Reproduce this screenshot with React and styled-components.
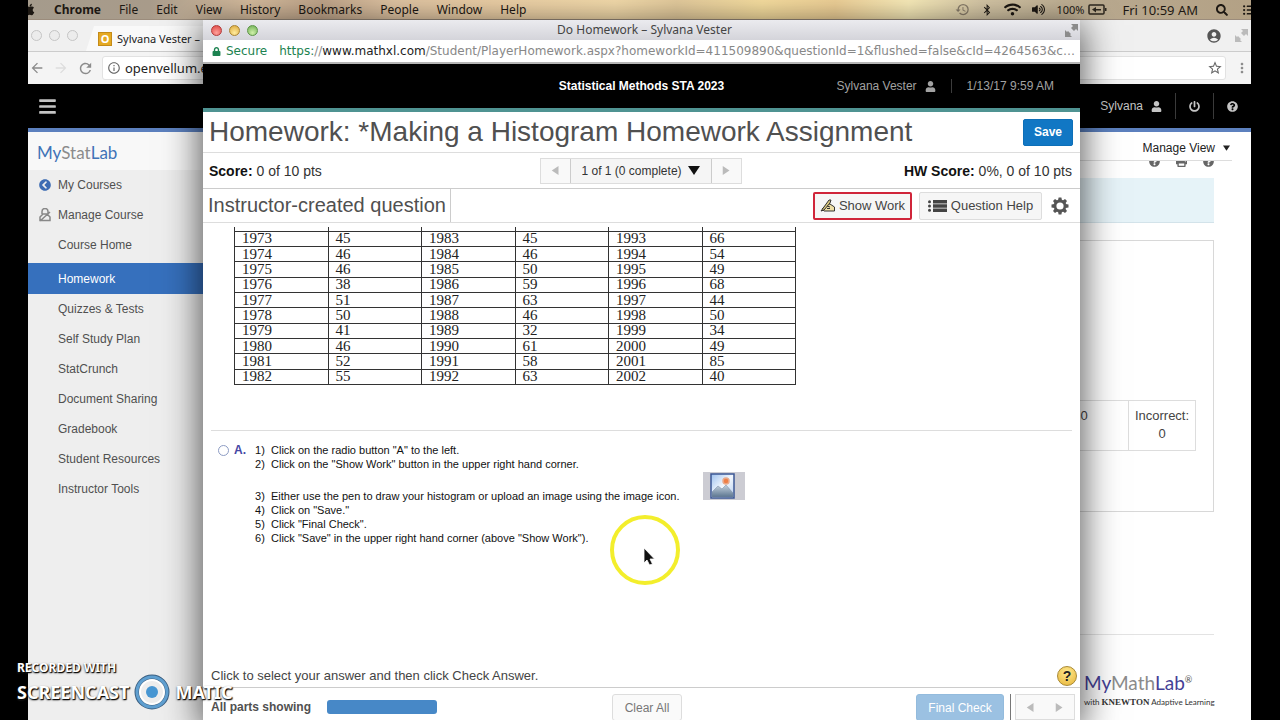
import styled, { createGlobalStyle } from "styled-components";
import { FaApple, FaBars, FaBluetoothB, FaLock, FaPowerOff, FaQuestionCircle, FaSearch, FaUser, FaVolumeUp, FaChevronCircleLeft, FaPrint, FaListUl, FaWifi } from "react-icons/fa";
import { MdAccountCircle, MdArrowBack, MdArrowForward, MdHistory, MdInfoOutline, MdMoreVert, MdRefresh, MdStarBorder } from "react-icons/md";

const GlobalStyle = createGlobalStyle`
    * {
        box-sizing: border-box;
    }

    body {
        margin: 0;
        background: #000;
        font-family: "Liberation Sans", Arial, sans-serif;
        font-size: 14px;
        color: #444;
    }

    button, input, select {
        font: inherit;
        color: inherit;
        margin: 0;
    }

    svg {
        display: block;
        flex-shrink: 0;
    }
`

const Desktop = styled.div`
    position: relative;
    display: flex;
    flex-direction: column;
    height: 100vh;
    margin: 0 29px 0 28px;
    overflow: hidden;
`

/* menu bar */

const MenuBar = styled.header`
    display: flex;
    align-items: center;
    justify-content: space-between;
    height: 20px;
    flex-shrink: 0;
    overflow: hidden;
    background: linear-gradient(90deg, #a59b8c 0%, #a89b8a 10%, #d9bfa0 18%, #c2a78c 24%, #e3c7a5 30%, #efd2a8 38%, #f8dfae 48%, #e8cfa0 53%, #fbe2a2 60%, #f3d49a 66%, #fdf0bd 72%, #d8c9a8 78%, #b8a88e 88%, #b3a185 100%);
    border-bottom: 1px solid #9b8c7c;
    font-family: "Noto Sans", "Lucida Grande", sans-serif;
    font-size: 12px;
    line-height: 18px;
    color: #1d1813;
`

const MenuItems = styled.nav`
    display: flex;
    align-items: center;
    gap: 18px;
    margin-left: -5px;
`

const MenuItem = styled.span`
    font-weight: ${props => props.$bold ? 700 : 400};
`

const MenuStatus = styled.div`
    display: flex;
    align-items: center;
    gap: 15px;
    margin-right: -4px;
`

const StatusIcons = styled.div`
    display: flex;
    align-items: center;
    gap: 11px;
`

const Battery = styled.span`
    display: flex;
    align-items: center;
    gap: 4px;
    font-size: 11px;
`

const Clock = styled.span`
    padding-right: 3px;
    font-size: 13px;
`

/* browser window at the back */

const BackWindow = styled.section`
    display: flex;
    flex-direction: column;
    flex: 1;
    background: #fff;
`

const TabStrip = styled.div`
    display: flex;
    align-items: center;
    height: 32px;
    padding: 0 3px;
    background: #f0f0f0;
    border-bottom: 1px solid #ccc;
`

const Lights = styled.div`
    display: flex;
    gap: 7px;
`

const Light = styled.span`
    width: 11px;
    height: 11px;
    border-radius: 50%;
    border: 1px solid ${props => props.$edge};
    background: ${props => props.$fill};
`

const Tab = styled.div`
    display: flex;
    align-items: center;
    gap: 5px;
    height: 25px;
    margin: 6px 0 0 8px;
    padding: 0 12px;
    background: #f9f9f9;
    clip-path: polygon(8px 0, 100% 0, 100% 100%, 0 100%);
    font-family: "Noto Sans", sans-serif;
    font-size: 11px;
    color: #222;
`

const TabMark = styled.span`
    width: 14px;
    height: 14px;
    background: #e5a922;
    border: 1px solid #c48b18;
    color: #fff;
    font-weight: 700;
    line-height: 12px;
    text-align: center;
`

const StripEnd = styled.div`
    display: flex;
    align-items: center;
    gap: 13px;
    margin-left: auto;
    color: #555;
`

const AddressBar = styled.div`
    display: flex;
    align-items: center;
    gap: 8px;
    height: 32px;
    padding: 0 1px;
    background: #f4f4f4;
    color: #8b8b8b;
`

const AddressBox = styled.label`
    display: flex;
    align-items: center;
    flex: 1;
    gap: 4px;
    height: 24px;
    padding: 0 2px 0 4px;
    background: #fff;
    border: 1px solid #e2e2e2;
    border-radius: 3px;
    color: #666;
`

const AddressInput = styled.input`
    flex: 1;
    min-width: 0;
    border: 0;
    padding: 0;
    outline: 0;
    background: none;
    font-family: "Noto Sans", sans-serif;
    font-size: 13px;
    color: #222;
`

const CourseBar = styled.div`
    display: flex;
    align-items: center;
    height: 48px;
    flex-shrink: 0;
    padding: 0 13px 0 10px;
    background: #000;
    border-bottom: 4px solid #5c80be;
    color: #c4c4c4;
`

const BarButton = styled.button`
    display: flex;
    align-items: center;
    gap: 8px;
    height: 26px;
    padding: 0;
    border: 0;
    background: none;
    color: #c4c4c4;
    font-size: 12px;
`

const BarGroup = styled.div`
    display: flex;
    align-items: center;
    gap: 13px;
    margin-left: auto;
`

const BarLine = styled.span`
    width: 1px;
    height: 26px;
    background: #3a3a3a;
`

const CourseBody = styled.div`
    display: flex;
    flex: 1;
`

const Sidebar = styled.aside`
    width: 190px;
    background: #eee;
`

const StatLogo = styled.div`
    height: 38px;
    padding: 8px 9px 0;
    background: #f8f8f8;
    font-family: "Lato", sans-serif;
    font-size: 17px;
    line-height: 26px;
    color: #3f73b7;
`

const Soft = styled.span`
    color: #8b8b8b;
`

const SideLink = styled.a`
    display: flex;
    align-items: center;
    gap: 7px;
    height: ${props => props.$active ? 31 : 30}px;
    margin-top: ${props => props.$active ? 3 : 0}px;
    padding-left: ${props => props.$icon ? 11 : 30}px;
    background: ${props => props.$active ? "#3670bd" : "none"};
    color: ${props => props.$active ? "#fff" : "#505050"};
    text-decoration: none;
    font-size: 12px;
`

const CourseMain = styled.main`
    display: flex;
    flex-direction: column;
    flex: 1;
    padding: 0 37px 0 20px;
`

const ManageRow = styled.div`
    display: flex;
    justify-content: flex-end;
    height: 29px;
    margin-right: -18px;
    border-bottom: 1px solid #ddd;
`

const ManageButton = styled.button`
    display: flex;
    align-items: center;
    gap: 8px;
    height: 32px;
    padding: 0 2px;
    border: 0;
    background: none;
    font-size: 12px;
    color: #222;
`

const ToolRow = styled.div`
    display: flex;
    justify-content: flex-end;
    align-items: flex-end;
    gap: 16px;
    height: 6px;
    overflow: hidden;
    color: #666;
`

const Notice = styled.div`
    height: 45px;
    margin-top: 11px;
    background: #e6f3f8;
    border-bottom: 1px solid #d3e3ea;
`

const Results = styled.div`
    display: flex;
    flex-direction: column;
    align-items: flex-end;
    height: 272px;
    margin-top: 17px;
    padding: 159px 17px 0;
    border: 1px solid #d8d8d8;
`

const Tally = styled.div`
    display: flex;
    border: 1px solid #ddd;
`

const TallyCell = styled.div`
    width: ${props => props.$wide ? 88 : 67}px;
    height: 49px;
    padding-top: 6px;
    border-left: ${props => props.$wide ? "0" : "1px solid #ddd"};
    text-align: center;
    font-size: 13px;
    line-height: 18px;
`

const CourseFooter = styled.footer`
    display: flex;
    flex-direction: column;
    align-items: flex-end;
    margin: 122px 0 0;
    padding-top: 34px;
    border-top: 1px solid #e3e3e3;
`

const MathLogo = styled.div`
    width: 130px;
    font-family: "Lato", sans-serif;
    font-size: 19px;
    line-height: 28px;
    color: #453f96;
`

const Mark = styled.sup`
    font-size: 9px;
    line-height: 1px;
    color: #555;
`

const Knewton = styled.div`
    width: 130px;
    font-family: "Lato", sans-serif;
    font-size: 8px;
    line-height: 10px;
    white-space: nowrap;
    color: #333;

    b {
        font-family: "Liberation Serif", serif;
        font-size: 9px;
    }
`

/* homework player window */

const Player = styled.section`
    position: absolute;
    top: 20px;
    bottom: 0;
    left: 175px;
    right: 171px;
    display: flex;
    flex-direction: column;
    background: #fff;
    box-shadow: 0 8px 34px 3px rgba(0, 0, 0, 0.65);
`

const TitleBar = styled.div`
    display: grid;
    grid-template-columns: 1fr auto 1fr;
    align-items: center;
    height: 20px;
    flex-shrink: 0;
    padding: 0 2px 0 8px;
    background: linear-gradient(#ebebef, #d4d4da);
    font-family: "Noto Sans", sans-serif;
    font-size: 12px;
    line-height: 18px;
    color: #444;
`

const TitleEnd = styled.div`
    display: flex;
    justify-content: flex-end;
`

const UrlBar = styled.div`
    display: flex;
    align-items: center;
    height: 24px;
    flex-shrink: 0;
    padding: 0 0 0 9px;
    border-bottom: 2px solid #b5b5b5;
    font-family: "DejaVu Sans", sans-serif;
    font-size: 12px;
    color: #888;
`

const Secure = styled.span`
    display: flex;
    align-items: center;
    gap: 5px;
    margin-right: 12px;
    color: #1c8250;
`

const Url = styled.span`
    flex: 1;
    min-width: 0;
    overflow: hidden;
    white-space: nowrap;
`

const UrlPart = styled.span`
    color: ${props => props.$color};
`

const PlayerBar = styled.div`
    display: grid;
    grid-template-columns: 1fr auto 1fr;
    align-items: center;
    height: 48px;
    flex-shrink: 0;
    padding: 0 26px 0 0;
    background: #000;
    border-bottom: 4px solid #4f9392;
    font-size: 12px;
    color: #a2a2a2;
`

const CourseName = styled.span`
    padding-left: 26px;
    font-weight: 700;
    color: #fff;
`

const UserInfo = styled.div`
    display: flex;
    align-items: center;
    justify-content: flex-end;
    gap: 15px;
`

const UserName = styled.span`
    display: flex;
    align-items: center;
    gap: 8px;
`

const Divider = styled.span`
    width: 1px;
    height: 14px;
    background: #3c3c3c;
`

const Heading = styled.div`
    display: flex;
    align-items: center;
    justify-content: space-between;
    height: 41px;
    flex-shrink: 0;
    padding: 0 7px 0 6px;
    border-bottom: 1px solid #ddd;
`

const Title = styled.h1`
    margin: 0;
    font-size: 28px;
    line-height: 36px;
    font-weight: 400;
    white-space: nowrap;
    color: #505050;
`

const SaveButton = styled.button`
    width: 50px;
    height: 27px;
    padding: 0;
    border: 1px solid #0d6fb8;
    border-radius: 2px;
    background: #1177c4;
    color: #fff;
    font-size: 12px;
    font-weight: 700;
`

const ScoreRow = styled.div`
    display: grid;
    grid-template-columns: 1fr auto 1fr;
    align-items: center;
    height: 36px;
    flex-shrink: 0;
    padding: 0 8px 0 6px;
    border-bottom: 1px solid #ccc;
    color: #333;

    b {
        color: #111;
    }
`

const HwScore = styled.span`
    text-align: right;
`

const Pager = styled.div`
    display: flex;
    height: 26px;
    border: 1px solid #ddd;
    background: #f9f9f9;
    font-size: 12px;
`

const PagerButton = styled.button`
    display: flex;
    align-items: center;
    justify-content: center;
    width: 29px;
    padding: 0;
    border: 0;
    background: none;
    color: #bbb;
`

const PagerPick = styled.label`
    position: relative;
    display: flex;
    align-items: center;
    border-left: 1px solid #ccc;
    border-right: 1px solid #ccc;
    background: #f5f5f5;

    svg {
        position: absolute;
        right: 11px;
        pointer-events: none;
        color: #111;
    }
`

const PagerSelect = styled.select`
    appearance: none;
    width: 140px;
    height: 24px;
    padding: 0 11px;
    border: 0;
    outline: 0;
    background: none;
`

const QuestionRow = styled.div`
    display: flex;
    align-items: center;
    height: 34px;
    flex-shrink: 0;
    padding: 0 11px 0 5px;
    border-bottom: 1px solid #ddd;
`

const QuestionTitle = styled.h2`
    display: flex;
    align-items: center;
    height: 33px;
    margin: 0 auto 0 0;
    padding-right: 4px;
    border-right: 1px solid #ccc;
    font-size: 20px;
    font-weight: 400;
    color: #505050;
`

const ToolButton = styled.button`
    display: flex;
    align-items: center;
    justify-content: center;
    gap: 4px;
    width: ${props => props.$alert ? 99 : 123}px;
    height: 28px;
    margin-right: ${props => props.$alert ? 7 : 9}px;
    padding: 0;
    border: ${props => props.$alert ? "2px solid #d0253a" : "1px solid #ddd"};
    border-radius: 2px;
    background: #f6f6f6;
    font-size: 13px;
`

const IconButton = styled.button`
    padding: 0;
    border: 0;
    background: none;
    color: #555;
`

const Question = styled.div`
    flex: 1;
    min-height: 0;
    padding: 4px 8px 0;
    overflow: hidden;
`

const DataTable = styled.table`
    width: 562px;
    height: 158px;
    margin-left: 23px;
    table-layout: fixed;
    border-collapse: collapse;
    font-family: "Liberation Serif", serif;
    font-size: 15px;
    line-height: 13px;
    color: #222;
`

const Cell = styled.td`
    height: ${props => props.$stub ? 4 : 15}px;
    padding: 0 0 0 7px;
    border: 1px solid #333;
    border-top-width: ${props => props.$stub ? 0 : 1}px;
`

const Answer = styled.label`
    display: flex;
    align-items: flex-start;
    margin-top: 45px;
    padding: 12px 0 0 7px;
    border-top: 1px solid #ddd;
    font-size: 11px;
    line-height: 14px;
    color: #111;
`

const Radio = styled.input`
    appearance: none;
    width: 11px;
    height: 11px;
    margin: 2px 5px 0 0;
    border: 1px solid #8d9cc4;
    border-radius: 50%;
`

const Letter = styled.b`
    width: 21px;
    font-size: 12px;
    color: #4547a5;
`

const Steps = styled.div`
    display: flex;
    flex-direction: column;
`

const Step = styled.div`
    display: flex;
    align-items: flex-end;
    height: ${props => props.$tall ? 32 : 14}px;
`

const StepNumber = styled.span`
    width: 16px;
`

const StepImage = styled.span`
    display: flex;
    padding-bottom: 3px;
    margin-left: 24px;
`

const Hint = styled.div`
    display: flex;
    align-items: center;
    justify-content: space-between;
    height: 24px;
    flex-shrink: 0;
    padding: 0 3px 0 8px;
    border-bottom: 1px solid #ccc;
    font-size: 13px;
`

const HelpButton = styled.button`
    width: 20px;
    height: 20px;
    padding: 0;
    border: 1px solid #a98a35;
    border-radius: 50%;
    background: radial-gradient(circle at 50% 30%, #ffe98f, #e7b437);
    color: #222;
    font-size: 14px;
    font-weight: 700;
    line-height: 18px;
`

const PlayerFooter = styled.footer`
    display: flex;
    align-items: flex-start;
    height: 32px;
    flex-shrink: 0;
    padding: 6px 5px 0 8px;
    overflow: hidden;
    font-size: 12px;
    line-height: 26px;
`

const Parts = styled.div`
    display: flex;
    align-items: center;
    flex: 1;
    gap: 16px;
    padding-right: 8px;
    font-weight: 700;
    color: #505050;
`

const Progress = styled.div`
    width: 110px;
    height: 14px;
    border-radius: 3px;
    background: #4788c7;
`

const FooterEnd = styled.div`
    display: flex;
    justify-content: flex-end;
    flex: 1;
`

const FooterButton = styled.button`
    width: ${props => props.$primary ? 88 : 70}px;
    height: 27px;
    padding: 0;
    border: 1px solid ${props => props.$primary ? "#93bbdd" : "#ddd"};
    border-radius: 3px;
    background: ${props => props.$primary ? "#9bc1e2" : "#fafafa"};
    color: ${props => props.$primary ? "#fff" : "#777"};
`

const FooterLine = styled.span`
    width: 1px;
    height: 27px;
    margin: 0 4px 0 6px;
    background: #777;
`

/* things the recorder lays over the screen */

const Pointer = styled.div`
    position: absolute;
    top: 515px;
    left: 581px;
`

const Watermark = styled.div`
    position: absolute;
    left: 17px;
    bottom: 10px;
    font-family: "Noto Sans", sans-serif;
    font-weight: 700;
    color: #fff;
    text-shadow: 1px 1px 1px #000, 0 1px 2px #333;
`

const Recorded = styled.div`
    font-size: 12px;
    line-height: 12px;
`

const Brand = styled.div`
    display: flex;
    align-items: center;
    gap: 5px;
    font-size: 18px;
    line-height: 36px;
`

const menu = ["File", "Edit", "View", "History", "Bookmarks", "People", "Window", "Help"]

const links = ["Course Home", "Homework", "Quizzes & Tests", "Self Study Plan", "StatCrunch", "Document Sharing", "Gradebook", "Student Resources", "Instructor Tools"]

const rows = [
    [1973, 45, 1983, 45, 1993, 66],
    [1974, 46, 1984, 46, 1994, 54],
    [1975, 46, 1985, 50, 1995, 49],
    [1976, 38, 1986, 59, 1996, 68],
    [1977, 51, 1987, 63, 1997, 44],
    [1978, 50, 1988, 46, 1998, 50],
    [1979, 41, 1989, 32, 1999, 34],
    [1980, 46, 1990, 61, 2000, 49],
    [1981, 52, 1991, 58, 2001, 85],
    [1982, 55, 1992, 63, 2002, 40],
]

const steps = [
    "Click on the radio button \"A\" to the left.",
    "Click on the \"Show Work\" button in the upper right hand corner.",
    "Either use the pen to draw your histogram or upload an image using the image icon.",
    "Click on \"Save.\"",
    "Click \"Final Check\".",
    "Click \"Save\" in the upper right hand corner (above \"Show Work\").",
]

function Triangle({ dir, size = 9 }) {
    const points = {
        left: "10,0 10,12 1,6",
        right: "1,0 1,12 10,6",
        down: "0,1 12,1 6,10",
    }
    return (
        <svg width={size} height={size} viewBox="0 0 12 12" fill="currentColor">
            <polygon points={points[dir]} />
        </svg>
    )
}

function Expand({ color }) {
    return (
        <svg width="13" height="13" viewBox="0 0 13 13" fill={color}>
            <path d="M6 0h7v7l-2-2-2 2-3-3 2-2zM7 13H0V6l2 2 1-1 3 3-1 1z" />
        </svg>
    )
}

function BatteryIcon() {
    return (
        <svg width="19" height="11" viewBox="0 0 19 11">
            <rect x="1" y="1" width="15" height="9" rx="1" fill="none" stroke="#2c261e" strokeWidth="1.500" />
            <path d="M17 4h1.500v3H17zM4 5.500l4-2.500v2h5v1.500H8v2z" fill="#2c261e" />
        </svg>
    )
}

function WritingHand() {
    return (
        <svg width="15" height="13" viewBox="0 0 15 13">
            <path d="M4 8l3-3 3 0 3 2 1.500 1v4H4L2 10z" fill="#eedfa5" stroke="#333" />
            <path d="M1 12L9 1h2l-1 3-6 7zM7 7l3 1M7 9.500h3" fill="#d9c77e" stroke="#333" />
        </svg>
    )
}

function HelpList() {
    return (
        <svg width="19" height="14" viewBox="0 0 19 14" fill="#444">
            <path d="M5 1h14v3.500H5zM5 5.300h14v3.500H5zM5 9.600h14v3.500H5z" />
            <circle cx="1.500" cy="2.700" r="1.500" />
            <circle cx="1.500" cy="7" r="1.500" />
            <circle cx="1.500" cy="11.300" r="1.500" />
        </svg>
    )
}

function Gear() {
    const teeth = [0, 45, 90, 135, 180, 225, 270, 315]
    return (
        <svg width="18" height="18" viewBox="0 0 18 18" fill="currentColor">
            <circle cx="9" cy="9" r="5" fill="none" stroke="currentColor" strokeWidth="2.800" />
            {teeth.map(angle => (
                <path key={angle} d="M7 3.500L7.600 0.500h2.800l0.600 3z" transform={`rotate(${angle} 9 9)`} />
            ))}
        </svg>
    )
}

function ManageIcon() {
    return (
        <svg width="12" height="14" viewBox="0 0 12 14" fill="none" stroke="#888" strokeWidth="1.500">
            <path d="M3 6V3.500a3 3 0 0 1 6 0V6M1 12.500h10V9L8 6H4L1 9zM1 13L11 4" />
        </svg>
    )
}

function ImageIcon() {
    return (
        <svg width="42" height="28" viewBox="0 0 42 28">
            <defs>
                <linearGradient id="sky" x2="1" y2="1">
                    <stop offset="0" stopColor="#9cc0ee" />
                    <stop offset="0.500" stopColor="#f2f7fd" />
                    <stop offset="1" stopColor="#b4cdee" />
                </linearGradient>
                <linearGradient id="hill" x2="0" y2="1">
                    <stop offset="0" stopColor="#c5d2de" />
                    <stop offset="1" stopColor="#5c7690" />
                </linearGradient>
            </defs>
            <rect width="42" height="28" fill="#ccccd3" />
            <rect x="8" y="2" width="23" height="24" fill="url(#sky)" stroke="#3b5795" strokeWidth="1.500" />
            <circle cx="23" cy="9" r="3" fill="#ef7f47" stroke="#e9a98a" strokeWidth="1.500" />
            <path d="M9 20l6-6 4 3 4-4 7 8v4H9z" fill="url(#hill)" stroke="#7085a0" strokeWidth="0.500" />
        </svg>
    )
}

function PlayerWindow() {
    return (
        <Player>
            <TitleBar>
                <Lights>
                    <Light $edge="#b33a3a" $fill="radial-gradient(circle at 50% 75%, #ffa09a, #dc4340)" />
                    <Light $edge="#a98432" $fill="radial-gradient(circle at 50% 75%, #ffec9d, #dba63a)" />
                    <Light $edge="#5d9548" $fill="radial-gradient(circle at 50% 75%, #cff0a9, #6dae52)" />
                </Lights>
                <span>Do Homework – Sylvana Vester</span>
                <TitleEnd><Expand color="#8b8b8b" /></TitleEnd>
            </TitleBar>

            <UrlBar>
                <Secure><FaLock size={9} />Secure</Secure>
                <Url>
                    <UrlPart $color="#1c8250">https:</UrlPart>//<UrlPart $color="#222">www.mathxl.com</UrlPart>/Student/PlayerHomework.aspx?homeworkId=411509890&amp;questionId=1&amp;flushed=false&amp;cId=4264563&amp;c…
                </Url>
            </UrlBar>

            <PlayerBar>
                <span />
                <CourseName>Statistical Methods STA 2023</CourseName>
                <UserInfo>
                    <UserName>Sylvana Vester <FaUser size={11} /></UserName>
                    <Divider />
                    <span>1/13/17 9:59 AM</span>
                </UserInfo>
            </PlayerBar>

            <Heading>
                <Title>Homework: *Making a Histogram Homework Assignment</Title>
                <SaveButton>Save</SaveButton>
            </Heading>

            <ScoreRow>
                <span><b>Score:</b> 0 of 10 pts</span>
                <Pager>
                    <PagerButton aria-label="Previous question"><Triangle dir="left" /></PagerButton>
                    <PagerPick>
                        <PagerSelect aria-label="Question">
                            <option>1 of 1 (0 complete)</option>
                        </PagerSelect>
                        <Triangle dir="down" size={12} />
                    </PagerPick>
                    <PagerButton aria-label="Next question"><Triangle dir="right" /></PagerButton>
                </Pager>
                <HwScore><b>HW Score:</b> 0%, 0 of 10 pts</HwScore>
            </ScoreRow>

            <QuestionRow>
                <QuestionTitle>Instructor-created question</QuestionTitle>
                <ToolButton $alert><WritingHand />Show Work</ToolButton>
                <ToolButton><HelpList />Question Help</ToolButton>
                <IconButton aria-label="Settings"><Gear /></IconButton>
            </QuestionRow>

            <Question>
                <DataTable>
                    <tbody>
                        <tr>
                            {rows[0].map((_, i) => <Cell key={i} $stub />)}
                        </tr>
                        {rows.map(row => (
                            <tr key={row[0]}>
                                {row.map((value, i) => <Cell key={i}>{value}</Cell>)}
                            </tr>
                        ))}
                    </tbody>
                </DataTable>

                <Answer>
                    <Radio type="radio" name="answer" />
                    <Letter>A.</Letter>
                    <Steps>
                        {steps.map((step, i) => (
                            <Step key={step} $tall={i === 2}>
                                <StepNumber>{i + 1})</StepNumber>
                                {step}
                                {i === 2 && <StepImage><ImageIcon /></StepImage>}
                            </Step>
                        ))}
                    </Steps>
                </Answer>
            </Question>

            <Hint>
                Click to select your answer and then click Check Answer.
                <HelpButton>?</HelpButton>
            </Hint>

            <PlayerFooter>
                <Parts>All parts showing <Progress /></Parts>
                <FooterButton>Clear All</FooterButton>
                <FooterEnd>
                    <FooterButton $primary>Final Check</FooterButton>
                    <FooterLine />
                    <Pager>
                        <PagerButton aria-label="Previous part"><Triangle dir="left" /></PagerButton>
                        <PagerButton aria-label="Next part"><Triangle dir="right" /></PagerButton>
                    </Pager>
                </FooterEnd>
            </PlayerFooter>
        </Player>
    )
}

export default function App() {
    return (
        <>
            <GlobalStyle />
            <Desktop>
                <MenuBar>
                    <MenuItems>
                        <FaApple size={13} />
                        <MenuItem $bold>Chrome</MenuItem>
                        {menu.map(item => <MenuItem key={item}>{item}</MenuItem>)}
                    </MenuItems>
                    <MenuStatus>
                        <StatusIcons>
                            <MdHistory size={15} color="#8b7f6c" />
                            <FaBluetoothB size={12} />
                            <FaWifi size={17} />
                            <FaVolumeUp size={13} />
                            <Battery>100% <BatteryIcon /></Battery>
                        </StatusIcons>
                        <Clock>Fri 10:59 AM</Clock>
                        <FaSearch size={12} />
                        <FaListUl size={12} />
                    </MenuStatus>
                </MenuBar>

                <BackWindow>
                    <TabStrip>
                        <Lights>
                            <Light $edge="#c5c5c5" $fill="#ececec" />
                            <Light $edge="#c5c5c5" $fill="#ececec" />
                            <Light $edge="#c5c5c5" $fill="#ececec" />
                        </Lights>
                        <Tab><TabMark>O</TabMark>Sylvana Vester –</Tab>
                        <StripEnd>
                            <MdAccountCircle size={16} />
                            <Expand color="#bbb" />
                        </StripEnd>
                    </TabStrip>

                    <AddressBar>
                        <MdArrowBack size={16} />
                        <MdArrowForward size={16} color="#ddd" />
                        <MdRefresh size={17} />
                        <AddressBox>
                            <MdInfoOutline size={14} />
                            <AddressInput aria-label="Address" defaultValue="openvellum.e" />
                            <MdStarBorder size={16} />
                        </AddressBox>
                        <MdMoreVert size={16} />
                    </AddressBar>

                    <CourseBar>
                        <BarButton aria-label="Menu"><FaBars size={19} /></BarButton>
                        <BarGroup>
                            <BarButton>Sylvana <FaUser size={11} /></BarButton>
                            <BarLine />
                            <BarButton aria-label="Sign out"><FaPowerOff size={11} /></BarButton>
                            <BarLine />
                            <BarButton aria-label="Help"><FaQuestionCircle size={11} /></BarButton>
                        </BarGroup>
                    </CourseBar>

                    <CourseBody>
                        <Sidebar>
                            <StatLogo>My<Soft>Stat</Soft>Lab</StatLogo>
                            <SideLink href="#" $icon><FaChevronCircleLeft size={12} color="#3d6cb3" />My Courses</SideLink>
                            <SideLink href="#" $icon><ManageIcon />Manage Course</SideLink>
                            {links.map(link => (
                                <SideLink key={link} href="#" $active={link === "Homework"}>{link}</SideLink>
                            ))}
                        </Sidebar>

                        <CourseMain>
                            <ManageRow>
                                <ManageButton>Manage View <Triangle dir="down" size={7} /></ManageButton>
                            </ManageRow>
                            <ToolRow>
                                <FaQuestionCircle size={11} />
                                <FaPrint size={11} />
                                <FaQuestionCircle size={11} />
                            </ToolRow>
                            <Notice />
                            <Results>
                                <Tally>
                                    <TallyCell $wide>0</TallyCell>
                                    <TallyCell>Incorrect:<br />0</TallyCell>
                                </Tally>
                            </Results>
                            <CourseFooter>
                                <MathLogo>My<Soft>Math</Soft>Lab<Mark>®</Mark></MathLogo>
                                <Knewton>with <b>KNEWTON</b> Adaptive Learning</Knewton>
                            </CourseFooter>
                        </CourseMain>
                    </CourseBody>
                </BackWindow>

                <PlayerWindow />

                <Pointer>
                    <svg width="72" height="72" viewBox="0 0 72 72">
                        <circle cx="36" cy="35" r="33" fill="none" stroke="#f3ee2c" strokeWidth="4" />
                        <path d="M35 33v15l3-3 2.500 5 3-1-2.500-5h4.500z" fill="#111" stroke="#fff" strokeWidth="0.800" />
                    </svg>
                </Pointer>
            </Desktop>

            <Watermark>
                <Recorded>RECORDED WITH</Recorded>
                <Brand>
                    SCREENCAST
                    <svg width="36" height="36" viewBox="0 0 36 36">
                        <circle cx="18" cy="18" r="15" fill="none" stroke="#3c5f80" strokeWidth="5" />
                        <circle cx="18" cy="18" r="15" fill="none" stroke="#5f9fd0" strokeWidth="3" />
                        <circle cx="18" cy="18" r="12" fill="none" stroke="#fff" strokeWidth="2" />
                        <circle cx="18" cy="18" r="6" fill="#4796d2" />
                    </svg>
                    MATIC
                </Brand>
            </Watermark>
        </>
    )
}
